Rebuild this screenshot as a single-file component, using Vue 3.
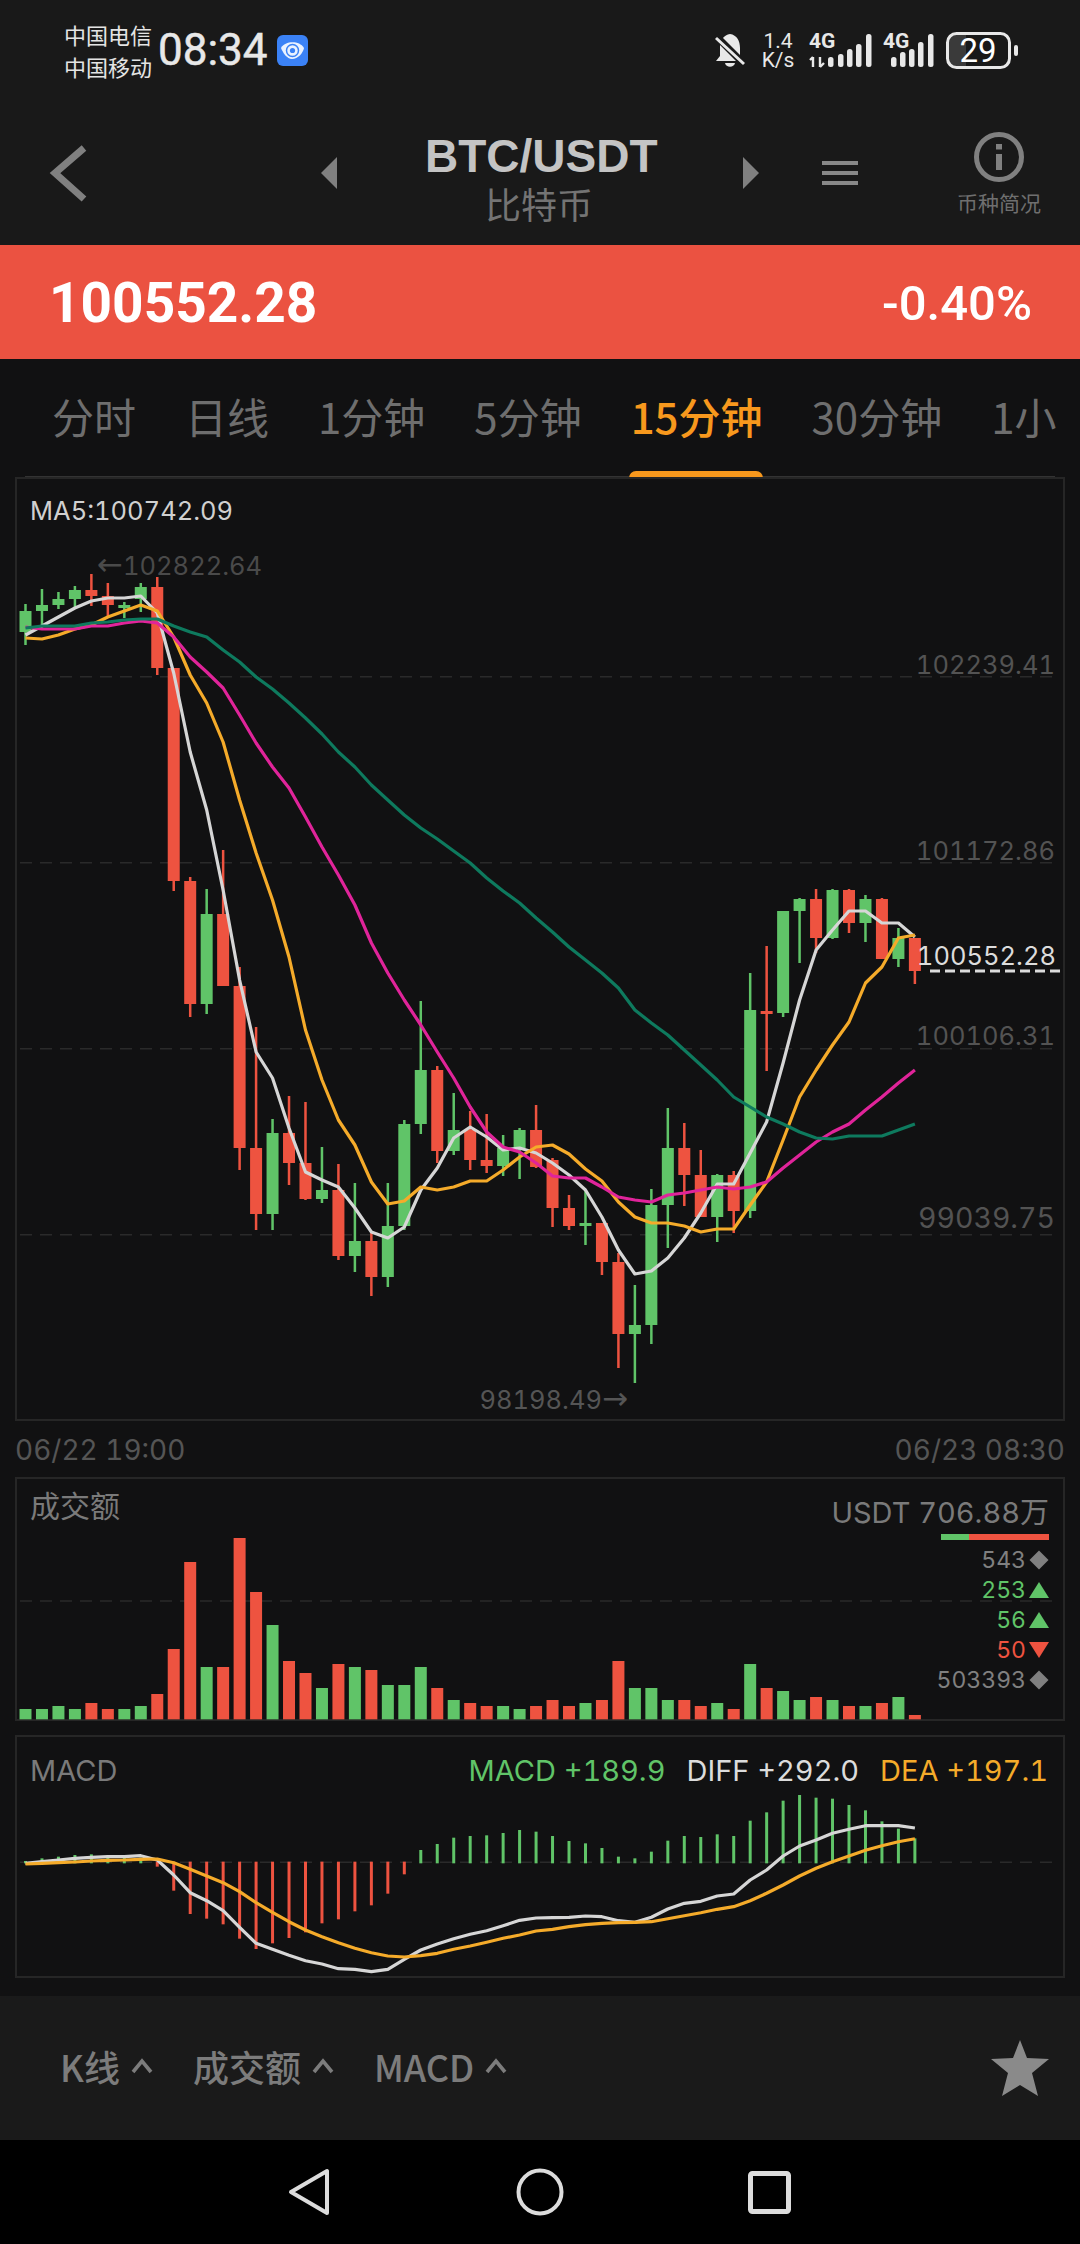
<script setup>
const RED = '#ee5340'
const GREEN = '#60c468'
const cx = (i) => 25.5 + 16.47 * i

const candles = [
  ['g',604,611,632,645],['g',589,605,611,625],['g',592,599,605,609],['g',586,590,599,607],['r',574,590,596,606],
  ['r',583,596,605,617],['g',602,605,608,618],['g',583,587,599,612],['r',577,587,668,675],['r',668,668,881,891],
  ['r',877,881,1004,1017],['g',889,914,1004,1014],['r',850,914,986,986],['r',967,986,1148,1170],['r',1027,1148,1214,1230],
  ['g',1119,1133,1214,1230],['r',1096,1133,1163,1185],['r',1102,1163,1199,1200],['g',1147,1190,1199,1203],['r',1164,1190,1256,1260],
  ['g',1183,1241,1256,1272],['r',1233,1241,1277,1296],['g',1183,1226,1277,1287],['g',1120,1124,1226,1230],['g',1001,1070,1124,1134],
  ['r',1066,1070,1151,1163],['g',1093,1130,1151,1155],['r',1111,1130,1160,1170],['r',1114,1160,1166,1173],['g',1135,1148,1166,1176],
  ['g',1128,1130,1148,1179],['r',1105,1130,1167,1168],['r',1158,1160,1208,1227],['r',1195,1208,1226,1230],['g',1190,1223,1226,1245],
  ['r',1223,1223,1262,1275],['r',1253,1262,1334,1368],['g',1285,1325,1334,1383],['g',1189,1205,1325,1344],['g',1108,1148,1205,1248],
  ['r',1123,1148,1175,1206],['r',1150,1175,1217,1217],['g',1174,1175,1217,1242],['r',1171,1175,1211,1233],['g',973,1010,1211,1218],
  ['r',946,1011,1014,1071],['g',911,911,1013,1017],['g',898,899,911,963],['r',889,899,938,953],['g',889,890,938,939],
  ['r',889,890,923,933],['g',895,899,923,942],['r',898,899,959,959],['g',928,938,959,967],['r',938,938,971,984]
].map(([c, wt, bt, bb, wb], i) => ({ i, x: cx(i), color: c === 'r' ? RED : GREEN, wt, bt, bb, wb }))

const toPts = (ys) => ys.map((y, i) => `${cx(i).toFixed(1)},${y}`).join(' ')

const maLines = [
  { color: '#d6d6d6', pts: toPts([635,626,617,608,601,598,598,596,613,673,752,810,890,980,1052,1078,1128,1172,1180,1187,1208,1232,1238,1227,1190,1168,1138,1127,1137,1150,1148,1153,1163,1175,1190,1217,1250,1274,1271,1258,1238,1213,1184,1184,1153,1122,1063,1000,950,930,911,911,923,923,937]) },
  { color: '#f5ab2a', pts: toPts([638,639,635,629,625,617,611,605,611,637,675,703,742,800,853,900,957,1030,1080,1120,1145,1182,1204,1201,1187,1190,1187,1181,1181,1170,1157,1147,1145,1154,1169,1181,1202,1217,1223,1223,1226,1232,1229,1229,1205,1182,1140,1097,1070,1045,1022,983,967,938,935]) },
  { color: '#e0249a', pts: toPts([627,629,629,629,626,626,623,621,623,637,657,672,688,715,743,767,788,817,847,875,905,943,973,1000,1025,1052,1078,1107,1132,1147,1152,1163,1176,1178,1178,1187,1197,1200,1202,1195,1193,1190,1187,1189,1187,1182,1168,1155,1142,1132,1124,1110,1097,1083,1070]) },
  { color: '#0e7a5e', pts: toPts([628,626,626,626,623,622,620,619,619,626,632,637,650,662,677,689,703,718,734,752,767,785,800,815,828,839,851,863,878,891,903,918,932,947,960,973,988,1010,1023,1035,1050,1065,1080,1097,1107,1117,1124,1132,1138,1139,1136,1136,1136,1130,1124]) }
]

const volTop = [747,747,738,747,729,747,747,738,702,567,306,621,621,234,396,495,603,639,684,612,621,630,675,675,621,684,720,729,738,738,747,738,720,738,729,720,603,684,684,720,720,738,729,747,612,684,693,720,711,720,738,738,729,711,765]
const volBars = volTop.map((t, i) => ({
  i,
  x: cx(i) - 6,
  y: 1460 + t / 3,
  h: (778 - t) / 3,
  color: candles[i].color
}))

const macdZ = [393,385,380,375,373,377,383,383,410,482,552,566,583,626,657,640,624,607,580,568,544,526,491,433,360,342,323,318,316,309,300,305,318,333,340,354,380,385,365,332,318,321,313,318,272,247,212,195,203,206,225,241,274,296,325]
const macdBars = macdZ.map((z, i) => {
  const neg = i >= 8 && i <= 23
  const y1 = neg ? 1730 + 395 / 3 : 1730 + z / 3
  const y2 = neg ? 1730 + z / 3 : 1730 + 400 / 3
  return { i, x: cx(i), y1, y2, color: neg ? RED : GREEN }
})
const zPts = (zs) => zs.map((z, i) => `${cx(i).toFixed(1)},${(1730 + z / 3).toFixed(1)}`).join(' ')
const diffPts = zPts([400,395,390,385,382,380,380,377,390,435,488,512,542,592,640,658,676,692,702,716,718,725,718,688,660,642,626,613,602,587,571,564,563,562,558,560,572,577,562,537,520,514,498,492,450,420,378,348,330,310,298,287,287,287,294])
const deaPts = zPts([402,400,398,396,393,391,390,388,387,398,418,438,458,485,518,547,575,600,620,638,655,668,678,681,677,670,658,648,637,625,615,603,598,590,584,580,578,577,575,566,557,548,538,530,512,490,465,438,415,395,378,361,347,335,326])

const tabs = [
  { label: '分时' }, { label: '日线' }, { label: '1分钟' }, { label: '5分钟' },
  { label: '15分钟', active: true }, { label: '30分钟' }, { label: '1小' }
]
const gridY = [676.7, 862.7, 1048.7, 1234.7]
const axis = [
  { t: '102239.41', y: 674 }, { t: '101172.86', y: 860 },
  { t: '100106.31', y: 1045 }, { t: '99039.75', y: 1228, big: true }
]
const stats = [
  { v: '543', k: 'flat', cls: 'grey' }, { v: '253', k: 'up', cls: 'green' },
  { v: '56', k: 'up', cls: 'green' }, { v: '50', k: 'down', cls: 'red' },
  { v: '503393', k: 'flat', cls: 'grey' }
]
const sig1 = [[828,57],[838,54],[847,49],[856,44],[866,34]]
const sig2 = [[891,57],[900,52],[909,49],[918,42],[928,34]]
const bottomItems = ['K线', '成交额', 'MACD']
</script>

<template>
  <div class="page">
    <header class="top">
      <div class="status">
        <div class="carriers"><span>中国电信</span><span>中国移动</span></div>
        <div class="clock">08:34</div>
        <svg class="app-icon" viewBox="0 0 31 31" width="31" height="31">
          <rect width="31" height="31" rx="6" fill="#3b82f6" />
          <path d="M4 13 C8 6 22 5 27 13 C26 18 21 24 15 24 C10 24 6 18 4 13 Z" fill="#eaf2ff" />
          <circle cx="15.5" cy="15.5" r="6" fill="none" stroke="#3b82f6" stroke-width="1.5" />
          <circle cx="15.5" cy="15.5" r="2.6" fill="#3b82f6" />
        </svg>
        <div class="sys">
          <svg viewBox="710 28 310 44" width="310" height="44">
            <path d="M730 34 C737 35 740 41 740 48 L740 56 L744 61 L716 61 L720 56 L720 46 C720 40 724 35 730 34 Z" fill="#e8e8e8" />
            <path d="M725 63 H735 C734 68 726 68 725 63 Z" fill="#e8e8e8" />
            <line x1="715" y1="35" x2="745" y2="65" stroke="#191919" stroke-width="7" />
            <line x1="716" y1="38" x2="744" y2="64" stroke="#e8e8e8" stroke-width="3" />
            <path d="M813 57 V67 M810 60 L813 57 M820 57 V67 M820 67 L824 63" stroke="#e8e8e8" stroke-width="2.4" fill="none" />
            <rect v-for="b in sig1" :key="b[0]" :x="b[0]" :y="b[1]" width="5.5" :height="67 - b[1]" rx="2.5" fill="#e8e8e8" />
            <rect v-for="b in sig2" :key="b[0]" :x="b[0]" :y="b[1]" width="5.5" :height="67 - b[1]" rx="2.5" fill="#e8e8e8" />
            <path d="M956 34 H966 V66 H956 A8 8 0 0 1 948 58 V42 A8 8 0 0 1 956 34 Z" fill="#3a3a3a" />
            <rect x="947.5" y="33.5" width="62" height="34" rx="9" fill="none" stroke="#e8e8e8" stroke-width="3" />
            <rect x="1014" y="45" width="4" height="11" rx="2" fill="#e8e8e8" />
          </svg>
          <div class="speed"><span>1.4</span><span>K/s</span></div>
          <span class="net n1">4G</span>
          <span class="net n2">4G</span>
          <span class="batt">29</span>
        </div>
      </div>
      <nav class="nav">
        <svg class="back" viewBox="48 144 38 58" width="38" height="58">
          <polyline points="83,148 54,173 83,199" fill="none" stroke="#808080" stroke-width="7" />
        </svg>
        <svg class="tri-l" viewBox="0 0 16 32" width="16" height="32"><polygon points="0,16 16,0 16,32" fill="#808080" /></svg>
        <div class="title">
          <div class="pair">BTC/USDT</div>
          <div class="coin">比特币</div>
        </div>
        <svg class="tri-r" viewBox="0 0 16 32" width="16" height="32"><polygon points="0,0 16,16 0,32" fill="#808080" /></svg>
        <div class="menu"><i></i><i></i><i></i></div>
        <div class="info">
          <svg viewBox="0 0 50 50" width="50" height="50">
            <circle cx="25" cy="25" r="22.5" fill="none" stroke="#808080" stroke-width="5" />
            <rect x="22" y="12" width="6" height="5.5" fill="#808080" />
            <rect x="22" y="22" width="6" height="16" fill="#808080" />
          </svg>
          <span>币种简况</span>
        </div>
      </nav>
    </header>

    <section class="price">
      <div class="last">100552.28</div>
      <div class="pct">-0.40%</div>
    </section>

    <section class="tabs">
      <div class="tab-row">
        <span v-for="t in tabs" :key="t.label" class="tab" :class="{ active: t.active }">{{ t.label }}</span>
      </div>
      <div class="tab-line"><b class="indicator"></b></div>
    </section>

    <section class="panel kline">
      <svg class="plot" viewBox="15 477 1050 944">
        <line v-for="y in gridY" :key="y" x1="20" x2="1060" :y1="y" :y2="y" class="grid" />
        <g v-for="c in candles" :key="c.i">
          <rect :x="c.x - 1.25" :y="c.wt" width="2.5" :height="c.wb - c.wt" :fill="c.color" />
          <rect :x="c.x - 6" :y="c.bt" width="12" :height="Math.max(c.bb - c.bt, 2)" :fill="c.color" />
        </g>
        <polyline v-for="l in maLines" :key="l.color" :points="l.pts" :stroke="l.color" class="ma" />
        <text x="30" y="520" class="lb ma5">MA5:100742.09</text>
        <text x="97" y="575" class="lb dim"><tspan class="arrow">←</tspan>102822.64</text>
        <text x="628" y="1409" class="lb dim2" text-anchor="end">98198.49<tspan class="arrow">→</tspan></text>
        <text v-for="a in axis" :key="a.t" x="1055" :y="a.y" text-anchor="end" class="lb axis" :class="{ big: a.big }">{{ a.t }}</text>
        <text x="1056" y="965" text-anchor="end" class="lb now">100552.28</text>
        <line x1="930" x2="1063" y1="971" y2="971" class="now-line" />
      </svg>
    </section>

    <div class="times"><span>06/22 19:00</span><span>06/23 08:30</span></div>

    <section class="panel volume">
      <svg class="plot" viewBox="15 1477 1050 244">
        <line x1="20" x2="1060" y1="1601" y2="1601" class="grid" />
        <rect v-for="b in volBars" :key="b.i" :x="b.x" :y="b.y" width="12" :height="b.h" :fill="b.color" />
      </svg>
      <div class="panel-name vol-name">成交额</div>
      <div class="vol-info">
        <div class="vol-total">USDT&nbsp;706.88万</div>
        <div class="ratio"><i></i></div>
        <div class="stats">
          <div v-for="s in stats" :key="s.v" class="stat" :class="s.cls">
            <span>{{ s.v }}</span>
            <svg viewBox="0 0 20 20" width="20" height="20">
              <polygon v-if="s.k === 'flat'" points="10,0.5 19.5,10 10,19.5 0.5,10" fill="currentColor" />
              <polygon v-else-if="s.k === 'up'" points="10,2 20,18 0,18" fill="currentColor" />
              <polygon v-else points="0,2 20,2 10,18" fill="currentColor" />
            </svg>
          </div>
        </div>
      </div>
    </section>

    <section class="panel macd">
      <svg class="plot" viewBox="15 1735 1050 243">
        <line x1="20" x2="1060" y1="1862.3" y2="1862.3" class="grid" />
        <line v-for="b in macdBars" :key="b.i" :x1="b.x" :x2="b.x" :y1="b.y1" :y2="b.y2" :stroke="b.color" stroke-width="3" />
        <polyline :points="diffPts" stroke="#d6d6d6" class="ma" />
        <polyline :points="deaPts" stroke="#f5ab2a" class="ma" />
      </svg>
      <div class="panel-name macd-name">MACD</div>
      <div class="macd-vals">
        <span class="green">MACD +189.9</span>
        <span class="white">DIFF +292.0</span>
        <span class="amber">DEA +197.1</span>
      </div>
    </section>

    <footer class="bottom">
      <div v-for="b in bottomItems" :key="b" class="b-item">
        <span>{{ b }}</span>
        <svg viewBox="0 0 22 16" width="22" height="16"><polyline points="2,14 11,3 20,14" fill="none" stroke="#7c7c7c" stroke-width="3.6" /></svg>
      </div>
      <svg class="star" viewBox="990 2038 60 58" width="60" height="58">
        <polygon points="1020,2039 1027,2057 1049,2058 1032,2072 1038,2095 1020,2084 1002,2095 1008,2072 991,2058 1013,2057" fill="#8a8a8a" />
      </svg>
    </footer>

    <div class="sysnav">
      <svg viewBox="286 2168 48 48" width="48" height="48">
        <path d="M327 2171 V2213 L291 2192 Z" fill="none" stroke="#dcdcdc" stroke-width="4" stroke-linejoin="round" />
      </svg>
      <svg viewBox="516 2168 48 48" width="48" height="48">
        <circle cx="540" cy="2192" r="21.5" fill="none" stroke="#dcdcdc" stroke-width="4" />
      </svg>
      <svg viewBox="746 2168 48 48" width="48" height="48">
        <rect x="750.5" y="2173.5" width="38" height="38" rx="2" fill="none" stroke="#dcdcdc" stroke-width="5" />
      </svg>
    </div>
  </div>
</template>

<style>
html, body { margin: 0; background: #111112; }
</style>

<style scoped>
.page {
  width: 1080px;
  height: 2244px;
  overflow: hidden;
  background: #111112;
  display: flex;
  flex-direction: column;
  font-family: "Liberation Sans", "Noto Sans CJK SC", sans-serif;
}
.top { background: #191919; height: 245px; flex: none; }
.status { height: 100px; display: flex; align-items: center; padding-left: 64px; }
.carriers { display: flex; flex-direction: column; font: 22px/32px "Noto Sans CJK SC", sans-serif; color: #e4e4e4; width: 88px; }
.clock { font: 400 44px/1 Roboto, sans-serif; color: #e8e8e8; margin-left: 6px; width: 119px; -webkit-text-stroke: 0.5px #e8e8e8; }
.app-icon { flex: none; }
.sys { flex: none; margin-left: 402px; width: 310px; height: 44px; position: relative; }
.sys svg { display: block; }
.speed { position: absolute; left: 48px; top: 4px; width: 40px; display: flex; flex-direction: column; align-items: center; font: 21px/19px Roboto, sans-serif; color: #e8e8e8; }
.net { position: absolute; top: 4px; font: 700 21px/19px Roboto, sans-serif; color: #e8e8e8; }
.n1 { left: 99px; }
.n2 { left: 173px; }
.batt { position: absolute; left: 238px; width: 60px; top: 6px; text-align: center; font: 400 33px/34px Roboto, sans-serif; color: #fff; }

.nav { height: 145px; display: flex; align-items: center; padding-left: 49px; }
.back { flex: none; }
.tri-l { margin-left: 234px; flex: none; }
.title { width: 228px; margin-left: 88px; margin-right: 2px; text-align: center; flex: none; padding-top: 9px; }
.pair { font: 700 46px/54px "Liberation Sans", sans-serif; color: #c4c4c4; white-space: nowrap; }
.coin { font: 36px/44px "Noto Sans CJK SC", sans-serif; color: #747474; white-space: nowrap; margin-top: -2px; }
.tri-r { margin-left: 88px; flex: none; }
.menu { margin-left: 63px; width: 36px; display: flex; flex-direction: column; gap: 6px; flex: none; }
.menu i { display: block; height: 4px; background: #888; }
.info { margin-left: 99px; width: 84px; display: flex; flex-direction: column; align-items: center; flex: none; padding-top: 4px; }
.info svg { display: block; }
.info span { font: 21px/30px "Noto Sans CJK SC", sans-serif; color: #6f6f6f; white-space: nowrap; margin-top: 5px; }

.price { height: 114px; background: #eb5241; display: flex; align-items: center; justify-content: space-between; padding: 2px 48px 0 49px; box-sizing: border-box; flex: none; color: #fff; }
.last { font: 700 55px/1 Roboto, sans-serif; }
.pct { font: 500 49px/1 Roboto, sans-serif; }

.tabs { height: 118px; flex: none; display: flex; flex-direction: column; }
.tab-row { height: 117px; display: flex; align-items: center; gap: 49px; padding: 0 0 3px 52px; width: 1056px; box-sizing: border-box; overflow: hidden; white-space: nowrap; flex: none; }
.tab { font: 400 42px/1.2 "Noto Sans CJK SC", sans-serif; color: #6e6e6e; flex: none; }
.tab.active { color: #f7981d; font-weight: 500; }
.tab-line { height: 3px; margin: 0 25px; background: #333; position: relative; flex: none; }
.indicator { position: absolute; left: 604px; bottom: 0; width: 134px; height: 8px; background: #f7981d; border-radius: 7px 7px 0 0; }

.panel { margin: 0 15px; position: relative; box-shadow: inset 0 0 0 2px #262626; flex: none; }
.kline { height: 944px; }
.volume { height: 244px; }
.macd { height: 243px; margin-top: 14px; }
.plot { display: block; width: 100%; height: 100%; }
.grid { stroke: #2a2a2a; stroke-width: 1.5; stroke-dasharray: 12 8; }
.ma { fill: none; stroke-width: 3.2; stroke-linejoin: round; }
.lb { font-family: Inter, sans-serif; font-size: 25.5px; font-variant-numeric: tabular-nums; }
.arrow { font-family: "DejaVu Sans", sans-serif; font-size: 31px; }
.ma5 { fill: #d0d0d0; }
.dim { fill: #4a4a4a; }
.dim2 { fill: #555; }
.axis { fill: #535353; }
.axis.big { font-size: 28.5px; }
.now { fill: #dcdcdc; }
.now-line { stroke: #dcdcdc; stroke-width: 3; stroke-dasharray: 10 5; }

.times { height: 56px; flex: none; display: flex; justify-content: space-between; padding: 0 15px; font: 28px/58px Inter, sans-serif; font-variant-numeric: tabular-nums; color: #555; box-sizing: border-box; }

.panel-name { position: absolute; left: 15px; color: #7a7a7a; }
.vol-name { top: 7px; font: 30px/40px "Noto Sans CJK SC", sans-serif; }
.vol-info { position: absolute; top: 18px; right: 16px; display: flex; flex-direction: column; align-items: flex-end; }
.vol-total { font: 29px/36px Inter, "Noto Sans CJK SC", sans-serif; font-variant-numeric: tabular-nums; color: #7a7a7a; white-space: nowrap; }
.ratio { width: 108px; height: 6px; background: #ee5340; margin-top: 3px; }
.ratio i { display: block; width: 28px; height: 6px; background: #60c468; }
.stats { display: flex; flex-direction: column; align-items: flex-end; margin-top: 5px; }
.stat { display: flex; align-items: center; gap: 3px; height: 30px; font: 23px/30px Inter, sans-serif; font-variant-numeric: tabular-nums; }
.stat svg { display: block; flex: none; }
.grey { color: #808080; }
.green { color: #60c468; }
.red { color: #ee5340; }
.white { color: #dcdcdc; }
.amber { color: #f5ab2a; }
.macd-name { top: 18px; font: 29px/36px Inter, sans-serif; }
.macd-vals { position: absolute; top: 18px; right: 17px; display: flex; gap: 21px; font: 29px/36px Inter, sans-serif; font-variant-numeric: tabular-nums; white-space: nowrap; }

.bottom { margin-top: 18px; height: 144px; flex: none; background: #1a1a1a; display: flex; align-items: center; padding-left: 60px; gap: 40px; box-sizing: border-box; }
.b-item { display: flex; align-items: center; gap: 11px; font: 500 36px/44px "Noto Sans CJK SC", sans-serif; color: #7c7c7c; flex: none; margin-top: -5px; }
.b-item svg { flex: none; }
.star { margin-left: auto; margin-right: 30px; flex: none; }

.sysnav { height: 104px; flex: none; background: #000; display: flex; align-items: center; gap: 182px; padding-left: 286px; box-sizing: border-box; }
</style>
